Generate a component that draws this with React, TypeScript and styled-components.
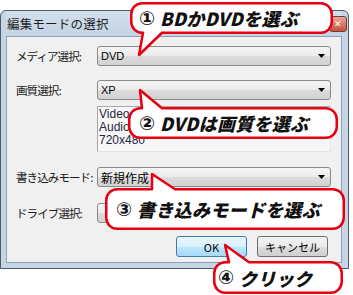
import styled, { createGlobalStyle } from "styled-components";

const GlobalStyle = createGlobalStyle`
  html, body {
    margin: 0;
    padding: 0;
    background: #ffffff;
  }
  body {
    font-family: "Noto Sans CJK JP", "Liberation Sans", sans-serif;
  }
`;

type Tail = { side: "top" | "bottom"; a: number; b: number; tx: number; ty: number };

const calloutPath = (w: number, h: number, r: number, t: Tail) => {
  const x0 = 1.25;
  const y0 = 1.25;
  const x1 = w - 1.25;
  const y1 = h - 1.25;
  const top =
    t.side === "top"
      ? `L ${t.a} ${y0} L ${t.tx} ${t.ty} L ${t.b} ${y0} `
      : "";
  const bottom =
    t.side === "bottom"
      ? `L ${t.b} ${y1} L ${t.tx} ${t.ty} L ${t.a} ${y1} `
      : "";
  return (
    `M ${x0 + r} ${y0} ${top}L ${x1 - r} ${y0} A ${r} ${r} 0 0 1 ${x1} ${y0 + r} ` +
    `L ${x1} ${y1 - r} A ${r} ${r} 0 0 1 ${x1 - r} ${y1} ${bottom}` +
    `L ${x0 + r} ${y1} A ${r} ${r} 0 0 1 ${x0} ${y1 - r} L ${x0} ${y0 + r} ` +
    `A ${r} ${r} 0 0 1 ${x0 + r} ${y0} Z`
  );
};

const Callout = ({
  left,
  top,
  width,
  height,
  pad,
  num,
  tail,
  children,
}: {
  left: number;
  top: number;
  width: number;
  height: number;
  pad: number;
  num: string;
  tail: Tail;
  children: React.ReactNode;
}) => (
  <Bubble $left={left} $top={top} $w={width} $h={height} $pad={pad}>
    <svg width={width} height={height}>
      <path
        d={calloutPath(width, height, 11, tail)}
        fill="#ffffff"
        stroke="#e60012"
        strokeWidth={2.5}
        strokeLinejoin="round"
      />
    </svg>
    <CircleNum>{num}</CircleNum>
    <BubbleText>{children}</BubbleText>
  </Bubble>
);

const Arrow = () => (
  <svg width="7" height="4" viewBox="0 0 7 4">
    <path d="M0 0 H7 L3.5 4 Z" fill="#000" />
  </svg>
);

export default function App() {
  return (
    <Page>
      <GlobalStyle />
      <Window>
        <TitleBar>
          <Title>編集モードの選択</Title>
          <CloseButton>✕</CloseButton>
        </TitleBar>
        <Client>
          <Row $mt={9}>
            <Label>メディア選択:</Label>
            <Select>
              <span>DVD</span>
              <Arrow />
            </Select>
          </Row>
          <Row $mt={14}>
            <Label>画質選択:</Label>
            <Select>
              <span>XP</span>
              <Arrow />
            </Select>
          </Row>
          <Row $mt={6}>
            <span />
            <InfoBox>
              <div>Video :</div>
              <div>Audio</div>
              <div>720x480</div>
            </InfoBox>
          </Row>
          <Row $mt={15}>
            <Label>書き込みモード:</Label>
            <Select>
              <SelectJa>新規作成</SelectJa>
              <Arrow />
            </Select>
          </Row>
          <Row $mt={16}>
            <Label>ドライブ選択:</Label>
            <Select>
              <span />
              <Arrow />
            </Select>
          </Row>
          <Buttons>
            <Button $primary>OK</Button>
            <Button>キャンセル</Button>
          </Buttons>
        </Client>
      </Window>

      <Callout
        left={130}
        top={2}
        width={203}
        height={32}
        pad={9}
        num="①"
        tail={{ side: "bottom", a: 13, b: 32, tx: 9, ty: 53 }}
      >
        BDかDVDを選ぶ
      </Callout>
      <Callout
        left={128}
        top={107}
        width={210}
        height={32}
        pad={11}
        num="②"
        tail={{ side: "top", a: 14, b: 34, tx: 12, ty: -17 }}
      >
        DVDは画質を選ぶ
      </Callout>
      <Callout
        left={105}
        top={188}
        width={240}
        height={42}
        pad={11}
        num="③"
        tail={{ side: "top", a: 47, b: 70, tx: 47, ty: -14 }}
      >
        書き込みモードを選ぶ
      </Callout>
      <Callout
        left={213}
        top={261}
        width={130}
        height={33}
        pad={5}
        num="④"
        tail={{ side: "top", a: 16, b: 36, tx: 12, ty: -16 }}
      >
        クリック
      </Callout>
    </Page>
  );
}

const Page = styled.div`
  position: relative;
  width: 353px;
  height: 295px;
  overflow: hidden;
  padding-top: 10px;
  box-sizing: border-box;
`;

const Window = styled.div`
  width: 349px;
  height: 259px;
  box-sizing: border-box;
  border: 1px solid #4d5a68;
  border-radius: 6px 6px 0 0;
  background: #c6d5e4;
  padding: 0 6px 5px 5px;
  display: flex;
  flex-direction: column;
`;

const TitleBar = styled.div`
  height: 25px;
  display: flex;
  align-items: center;
  justify-content: space-between;
  padding-left: 1px;
  background: linear-gradient(#d3dfeb, #c4d4e4);
`;

const Title = styled.div`
  font-size: 12.5px;
  color: #1c1c1c;
  letter-spacing: 0.2px;
`;

const CloseButton = styled.div`
  width: 16px;
  height: 14px;
  margin-right: -5px;
  border: 1px solid #7a3b36;
  border-radius: 3px;
  background: linear-gradient(#e9a79c, #c8503f);
  color: #fff;
  font-size: 9px;
  display: flex;
  align-items: center;
  justify-content: center;
`;

const Client = styled.div`
  flex: 1;
  background: #f0f0f0;
  border: 1px solid #8fa1b6;
  padding: 0 0 0 9px;
`;

const Row = styled.div<{ $mt: number }>`
  display: grid;
  grid-template-columns: 81px 234px;
  align-items: center;
  margin-top: ${(p) => p.$mt}px;
`;

const Label = styled.div`
  font-size: 11.5px;
  letter-spacing: -0.9px;
  color: #1a1a1a;
  white-space: nowrap;
`;

const Select = styled.div`
  height: 20px;
  box-sizing: border-box;
  border: 1px solid #8a8a8a;
  border-radius: 3px;
  background: linear-gradient(#f4f4f4 0%, #ebebeb 50%, #dcdcdc 51%, #d2d2d2 100%);
  display: flex;
  align-items: center;
  justify-content: space-between;
  padding: 0 5px 0 3px;
  font-family: "Liberation Sans", sans-serif;
  font-size: 11px;
  color: #000;
`;

const SelectJa = styled.span`
  font-family: "Noto Sans CJK JP", sans-serif;
  font-size: 12px;
`;

const InfoBox = styled.div`
  height: 46px;
  box-sizing: border-box;
  border: 1px solid #a8a8a8;
  border-right-color: #e4e4e4;
  border-bottom-color: #e4e4e4;
  background: #f7f7f7;
  padding: 1px 1px;
  font-family: "Liberation Sans", sans-serif;
  font-size: 12px;
  line-height: 13px;
  color: #262640;
`;

const Buttons = styled.div`
  display: flex;
  gap: 10px;
  margin: 13px 0 0 160px;
`;

const Button = styled.div<{ $primary?: boolean }>`
  width: 71px;
  height: 21px;
  box-sizing: border-box;
  border: 1px solid ${(p) => (p.$primary ? "#3c7fb1" : "#707070")};
  border-radius: 3px;
  background: ${(p) =>
    p.$primary
      ? "linear-gradient(#eaf6fd 0%, #d9f0fc 50%, #bee6fd 51%, #a7d9f5 100%)"
      : "linear-gradient(#f2f2f2 0%, #ebebeb 50%, #dddddd 51%, #cfcfcf 100%)"};
  display: flex;
  align-items: center;
  justify-content: center;
  font-size: 11px;
  color: #000;
`;

const Bubble = styled.div<{ $left: number; $top: number; $w: number; $h: number; $pad: number }>`
  position: absolute;
  left: ${(p) => p.$left}px;
  top: ${(p) => p.$top}px;
  width: ${(p) => p.$w}px;
  height: ${(p) => p.$h}px;
  padding-left: ${(p) => p.$pad}px;
  box-sizing: border-box;
  display: flex;
  align-items: center;
  gap: 5px;
  svg {
    position: absolute;
    left: 0;
    top: 0;
    overflow: visible;
  }
`;

const CircleNum = styled.span`
  position: relative;
  font-family: "DejaVu Sans", "Noto Sans CJK JP", sans-serif;
  font-weight: 700;
  font-size: 19px;
  line-height: 1;
  color: #111;
`;

const BubbleText = styled.span`
  position: relative;
  font-family: "Noto Sans CJK JP", sans-serif;
  font-weight: 900;
  font-style: italic;
  font-size: 18px;
  color: #111;
  white-space: nowrap;
  letter-spacing: 0.3px;
`;
